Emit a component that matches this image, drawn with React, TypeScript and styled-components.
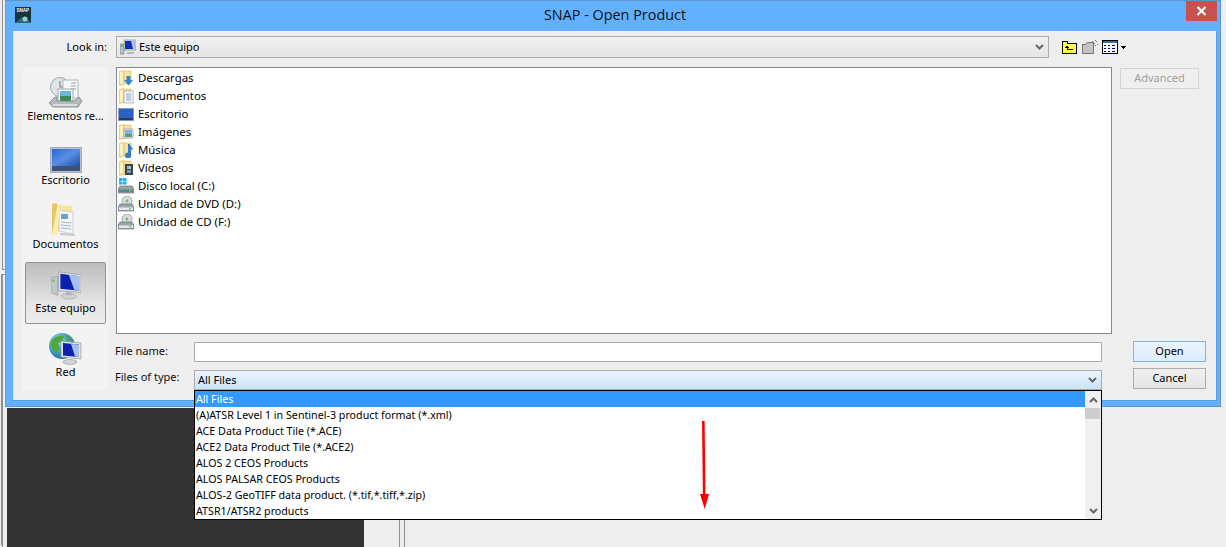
import React from "react";
import styled, {createGlobalStyle} from "styled-components";

const GlobalStyle = createGlobalStyle`
  html, body {
    margin: 0;
    padding: 0;
    background: #eeeeee;
  }
  body {
    font-family: "Noto Sans", "Liberation Sans", sans-serif;
    font-size: 11px;
    color: #000;
  }
`;

const places = ["Descargas", "Documentos", "Escritorio", "Imágenes", "Música", "Vídeos", "Disco local (C:)", "Unidad de DVD (D:)", "Unidad de CD (F:)"];

const fileTypes = [
    "All Files",
    "(A)ATSR Level 1 in Sentinel-3 product format (*.xml)",
    "ACE Data Product Tile (*.ACE)",
    "ACE2 Data Product Tile (*.ACE2)",
    "ALOS 2 CEOS Products",
    "ALOS PALSAR CEOS Products",
    "ALOS-2 GeoTIFF data product. (*.tif,*.tiff,*.zip)",
    "ATSR1/ATSR2 products",
];

const Chevron = ({up}: {up?: boolean}) => (
    <svg width="9" height="6" viewBox="0 0 9 6">
        <polyline points={up ? "1,5 4.5,1.5 8,5" : "1,1 4.5,4.5 8,1"} fill="none" stroke="#666" strokeWidth="2"/>
    </svg>
);

const SmallFolder = ({children}: {children?: React.ReactNode}) => (
    <svg width="16" height="16" viewBox="0 0 16 16">
        <path d="M6 1h7v13H6z" fill="#f6e29a" stroke="#d9bb68" strokeWidth="0.6"/>
        <path d="M1 1l5-1v15l-5 1z" fill="#f2cf70"/>
        <path d="M2 2l3-.6v12l-3 .6z" fill="#fdf0b8"/>
        {children}
    </svg>
);

const SmallDesktop = () => (
    <svg width="16" height="16" viewBox="0 0 16 16">
        <rect x="0" y="2" width="16" height="13" fill="#8b98ac"/>
        <rect x="1" y="3" width="14" height="9" fill="#2a62c8"/>
        <rect x="1" y="12" width="14" height="2" fill="#253a62"/>
    </svg>
);

const SmallDrive = ({disc}: {disc?: boolean}) => (
    <svg width="16" height="16" viewBox="0 0 16 16">
        {disc ? (
            <g>
                <circle cx="9" cy="5" r="5" fill="#d8dcdf" stroke="#8a9096" strokeWidth="0.7"/>
                <circle cx="9" cy="5" r="1.4" fill="#6fbf70"/>
            </g>
        ) : (
            <g fill="#19b4f0">
                <rect x="1" y="0" width="3.500" height="3"/>
                <rect x="5" y="0" width="3.500" height="3"/>
                <rect x="1" y="3.500" width="3.500" height="3"/>
                <rect x="5" y="3.500" width="3.500" height="3"/>
            </g>
        )}
        <path d="M2 8h12l2 3v4H0v-4z" fill="#9aa4a8" stroke="#5f686c" strokeWidth="0.6"/>
        <rect x="1" y="11.500" width="14" height="2.500" fill={disc ? "#e6e9ea" : "#4d8a8c"}/>
        <rect x="11" y="12" width="2" height="1.500" fill="#6cd06c"/>
    </svg>
);

const placeIcon = (name: string) => {
    switch (name) {
        case "Descargas":
            return <SmallFolder><path d="M8.500 6h4v4H15l-4.500 5.500L6 10h2.500z" fill="#2f86d6"/></SmallFolder>;
        case "Documentos":
            return <SmallFolder><rect x="6" y="3" width="9" height="12" fill="#f5f6f8" stroke="#9aa2aa" strokeWidth="0.7"/><path d="M8 6h5M8 8h5M8 10h5M8 12h5" stroke="#8ea4bc"/></SmallFolder>;
        case "Escritorio":
            return <SmallDesktop/>;
        case "Imágenes":
            return <SmallFolder><rect x="6" y="5" width="9" height="9" fill="#f2f4f6" stroke="#8c949c" strokeWidth="0.7"/><rect x="7" y="6" width="7" height="4" fill="#79b6d8"/><rect x="7" y="10" width="7" height="3" fill="#5a9a78"/></SmallFolder>;
        case "Música":
            return <SmallFolder><path d="M10 2h2c0 3 3 3 3 6l-2-1v6a3 3 0 1 1-3-2.500z" fill="#2f7fc8"/></SmallFolder>;
        case "Vídeos":
            return <SmallFolder><rect x="7" y="4" width="8" height="11" fill="#39414a"/><rect x="9" y="6" width="4" height="3" fill="#9cc0d0"/><rect x="9" y="10" width="4" height="3" fill="#7fa0a8"/></SmallFolder>;
        case "Disco local (C:)":
            return <SmallDrive/>;
        default:
            return <SmallDrive disc/>;
    }
};

const ComputerSmall = () => (
    <svg width="16" height="16" viewBox="0 0 16 16">
        <rect x="0" y="5" width="4" height="10" fill="#b9c0c4" stroke="#6e767a" strokeWidth="0.6"/>
        <rect x="1" y="6" width="2" height="2" fill="#57c457"/>
        <rect x="4" y="1" width="12" height="10" fill="#d3d8dc" stroke="#7b8388" strokeWidth="0.6"/>
        <path d="M5 2h10v8H5z" fill="#0a2fb8"/>
        <path d="M11 2h4v8h-2z" fill="#a9c0ee"/>
        <path d="M7 13h7v2H7z" fill="#b0b6ba"/>
    </svg>
);

const RecentIcon = () => (
    <svg width="34" height="32" viewBox="0 0 34 32">
        <circle cx="11" cy="10" r="9.500" fill="#dfe5e8" stroke="#9aa5aa"/>
        <path d="M11 4v6h5" fill="none" stroke="#7d888e" strokeWidth="1.200"/>
        <rect x="14" y="3" width="15" height="18" fill="#f6f7f8" stroke="#b2b8bc"/>
        <path d="M22 6h5M22 9h5M22 12h5" stroke="#7fa8c8"/>
        <rect x="9" y="12" width="15" height="14" fill="#f8f9fa" stroke="#a2a9ad"/>
        <rect x="11" y="14" width="11" height="5" fill="#6fb4dc"/>
        <rect x="11" y="19" width="11" height="5" fill="#3c8a58"/>
        <path d="M0 26l6-6h2v4h17l5-4 3 4-4 6H4z" fill="#b4babd" stroke="#70777b" strokeWidth="0.7"/>
        <path d="M4 28h24" stroke="#e6e9ea" strokeWidth="1.500"/>
    </svg>
);

const DesktopIcon = () => (
    <svg width="32" height="26" viewBox="0 0 32 26">
        <defs>
            <linearGradient id="deskScreen" x1="0" y1="0" x2="1" y2="1">
                <stop offset="0" stopColor="#2868d0"/>
                <stop offset="0.5" stopColor="#5a8ee4"/>
                <stop offset="1" stopColor="#1c4fa8"/>
            </linearGradient>
        </defs>
        <rect x="0.500" y="0.500" width="31" height="25" fill="#b8c0cc" stroke="#a0abbb"/>
        <rect x="2" y="2" width="28" height="17" fill="url(#deskScreen)"/>
        <rect x="2" y="19" width="28" height="5" fill="#3e5272"/>
    </svg>
);

const DocumentsIcon = () => (
    <svg width="30" height="34" viewBox="0 0 30 34">
        <path d="M1 1l5-1v30l-5 2z" fill="#e9c664"/>
        <path d="M6 2l15 1v25H6z" fill="#f7e49a"/>
        <path d="M8 7l14 2v22L8 28z" fill="#f3f5f7" stroke="#b2b8bc" strokeWidth="0.6"/>
        <rect x="10" y="11" width="7" height="5" fill="#6aa6cc"/>
        <path d="M10 19l10 1M10 22l10 1M10 25l10 1" stroke="#a8b4c0"/>
        <path d="M1 32L6 4l3 2-3 26z" fill="#fbeeb4"/>
        <path d="M9 31l15 1" stroke="#c8c8c8" strokeWidth="2"/>
    </svg>
);

const ComputerIcon = () => (
    <svg width="30" height="30" viewBox="0 0 32 32">
        <path d="M0 7l7-1v20l-7-3z" fill="#c4c8cb" stroke="#8b9195" strokeWidth="0.6"/>
        <rect x="1.500" y="9" width="2.500" height="2.500" fill="#6ac46a"/>
        <path d="M8 1l24 3v19l-24-2z" fill="#dde0e3" stroke="#8b9195" strokeWidth="0.6"/>
        <path d="M10 3l20 2.500V21L10 19z" fill="#0b22b0"/>
        <path d="M19 4l11 1.500V21l-5-.5z" fill="#a8c0ec"/>
        <ellipse cx="19" cy="27" rx="8" ry="3" fill="#cfd3d6" stroke="#969b9e" strokeWidth="0.6"/>
        <rect x="16" y="22" width="6" height="4" fill="#b2b7ba"/>
    </svg>
);

const NetworkIcon = () => (
    <svg width="33" height="32" viewBox="0 0 33 32">
        <defs>
            <radialGradient id="netGlobe" cx="0.35" cy="0.3" r="0.8">
                <stop offset="0" stopColor="#7fd4ea"/>
                <stop offset="1" stopColor="#146aa0"/>
            </radialGradient>
        </defs>
        <circle cx="13" cy="13" r="13" fill="url(#netGlobe)"/>
        <path d="M4 6c4-3 7-4 11-3l-2 5-4 2 2 5-3 5-5-4-2-5z" fill="#4fa83a"/>
        <path d="M17 2l6 4-5 3z" fill="#4fa83a"/>
        <path d="M12 8l20 2v16l-20-2z" fill="#dfe2e5" stroke="#8a9094" strokeWidth="0.6"/>
        <path d="M14 10l16 1.500V24l-16-1.500z" fill="#0b22b0"/>
        <path d="M22 11l8 .5V24l-4-.5z" fill="#a8c0ec"/>
        <ellipse cx="21" cy="29" rx="7" ry="2.500" fill="#cfd3d6" stroke="#969b9e" strokeWidth="0.6"/>
    </svg>
);

const SnapLogo = () => (
    <svg width="16" height="16" viewBox="0 0 16 16">
        <rect width="16" height="16" fill="#17353f"/>
        <path d="M0 16l7-6 5 1 4 5z" fill="#2d6a72"/>
        <circle cx="10" cy="12" r="2.500" fill="#9dc8d8"/>
        <text x="1.500" y="5" fontSize="4.500" fontWeight="700" fill="#fff" fontFamily="Liberation Sans, sans-serif">SNAP</text>
    </svg>
);

const UpFolderIcon = () => (
    <svg width="16" height="14" viewBox="0 0 16 14" shapeRendering="crispEdges">
        <path d="M1 1h5v2h9v10H1z" fill="#ffff4d" stroke="#000"/>
        <path d="M6 5l-2 2.500h1.500V10H12V9H7V7.500h1z" fill="#000"/>
    </svg>
);

const NewFolderIcon = () => (
    <svg width="17" height="14" viewBox="0 0 17 14" shapeRendering="crispEdges">
        <path d="M1 4h4l2-2h5v11H1z" fill="#c4c4c4" stroke="#777"/>
        <path d="M13 3h1M15 1h1M11 1h1M14 0v1M16 4h1M14 5h1" stroke="#777"/>
    </svg>
);

const DetailsIcon = () => (
    <svg width="24" height="14" viewBox="0 0 24 14" shapeRendering="crispEdges">
        <rect x="0.500" y="0.500" width="15" height="13" fill="#fff" stroke="#000"/>
        <rect x="1" y="1" width="14" height="2" fill="#3a6ea5"/>
        <path d="M2 5h2M6 5h2M10 5h3M2 8h2M6 8h2M10 8h3M2 11h2M6 11h2M10 11h3" stroke="#00007f"/>
        <path d="M18 6h6l-3 3z" fill="#000"/>
    </svg>
);

const App = () => {
    return (
        <>
            <GlobalStyle/>
            <Desktop>
                <Backdrop>
                    <LeftRail>
                        <RailTop/>
                        <RailBottom/>
                    </LeftRail>
                    <DarkPanel/>
                    <Sash/>
                </Backdrop>

                <DialogWindow>
                    <TitleBar>
                        <SnapLogo/>
                        <Title>SNAP - Open Product</Title>
                        <CloseButton aria-label="Close">
                            <svg width="11" height="10" viewBox="0 0 11 10">
                                <path d="M1.500 1l8 8M9.500 1l-8 8" stroke="#fff" strokeWidth="2.200"/>
                            </svg>
                        </CloseButton>
                    </TitleBar>

                    <Client>
                        <LookInLabel>Look in:</LookInLabel>
                        <LookInRow>
                            <Combo>
                                <ComputerSmall/>
                                <ComboText>Este equipo</ComboText>
                                <Chevron/>
                            </Combo>
                            <Toolbar>
                                <UpFolderIcon/>
                                <NewFolderIcon/>
                                <DetailsIcon/>
                            </Toolbar>
                        </LookInRow>

                        <Sidebar>
                            <ShortcutItem><RecentIcon/><ShortcutLabel>Elementos re...</ShortcutLabel></ShortcutItem>
                            <ShortcutItem><DesktopIcon/><ShortcutLabel>Escritorio</ShortcutLabel></ShortcutItem>
                            <ShortcutItem><DocumentsIcon/><ShortcutLabel>Documentos</ShortcutLabel></ShortcutItem>
                            <ShortcutItem $selected><ComputerIcon/><ShortcutLabel>Este equipo</ShortcutLabel></ShortcutItem>
                            <ShortcutItem><NetworkIcon/><ShortcutLabel>Red</ShortcutLabel></ShortcutItem>
                        </Sidebar>

                        <Main>
                            <ListRow>
                                <FileList>
                                    {places.map((name) => (
                                        <FileRow key={name}>
                                            {placeIcon(name)}
                                            <span>{name}</span>
                                        </FileRow>
                                    ))}
                                </FileList>
                                <AccessoryButton disabled>Advanced</AccessoryButton>
                            </ListRow>

                            <FormRow>
                                <Fields>
                                    <FieldLabel $inset={2}>File name:</FieldLabel>
                                    <NameInput/>
                                    <FieldLabel $inset={0}>Files of type:</FieldLabel>
                                    <TypeField>
                                        <Combo $active>
                                            <ComboText>All Files</ComboText>
                                            <Chevron/>
                                        </Combo>
                                        <TypePopup>
                                            <TypeList>
                                                {fileTypes.map((type, i) => (
                                                    <TypeRow key={type} $selected={i === 0}>{type}</TypeRow>
                                                ))}
                                            </TypeList>
                                            <ScrollTrack>
                                                <ScrollEnd><Chevron up/></ScrollEnd>
                                                <ScrollThumb/>
                                                <ScrollEnd><Chevron/></ScrollEnd>
                                            </ScrollTrack>
                                            <RedArrow width="11" height="90" viewBox="0 0 11 90">
                                                <path d="M4.300 1L5.200 76" stroke="#f00" strokeWidth="2.600" fill="none"/>
                                                <path d="M1 74h9l-4.300 15z" fill="#f00"/>
                                            </RedArrow>
                                        </TypePopup>
                                    </TypeField>
                                </Fields>
                                <Actions>
                                    <ActionButton $primary>Open</ActionButton>
                                    <ActionButton>Cancel</ActionButton>
                                </Actions>
                            </FormRow>
                        </Main>
                    </Client>
                </DialogWindow>
            </Desktop>
        </>
    );
};

const Desktop = styled.div`
  position: relative;
  width: 1226px;
  height: 547px;
  overflow: hidden;
  background: #eeeeee;
`;

const Backdrop = styled.div`
  display: flex;
  height: 100%;
`;

const LeftRail = styled.div`
  width: 7px;
  flex: none;
`;

const RailTop = styled.div`
  height: 269px;
  width: 3px;
  margin-left: 2px;
  border-left: 1px solid #8f8f8f;
  border-bottom: 1px solid #8f8f8f;
`;

const RailBottom = styled.div`
  height: 272px;
  width: 3px;
  margin: 4px 0 0 2px;
  border-left: 1px solid #8f8f8f;
  border-top: 1px solid #8f8f8f;
  box-shadow: -2px -1px 0 -1px #8f8f8f;
`;

const DarkPanel = styled.div`
  width: 357px;
  flex: none;
  margin-top: 408px;
  background: #333333;
`;

const Sash = styled.div`
  width: 4px;
  flex: none;
  margin-left: 35px;
  border-left: 1px solid #8f8f8f;
  border-right: 1px solid #8f8f8f;
`;

const DialogWindow = styled.div`
  position: absolute;
  left: 5px;
  top: 0;
  width: 1216px;
  height: 407px;
  box-sizing: border-box;
  display: flex;
  flex-direction: column;
  background: #62b0fe;
  border: 1px solid #5c94cc;
  border-left-color: #7d9ab8;
  padding: 0 3px 5px 7px;
`;

const TitleBar = styled.div`
  position: relative;
  height: 30px;
  flex: none;
  display: flex;
  align-items: center;
  padding: 0 0 0 2px;
  & > svg {
    margin-top: -2px;
  }
`;

const Title = styled.div`
  position: absolute;
  left: 0;
  right: 0;
  top: 4px;
  text-align: center;
  font-family: "Open Sans", sans-serif;
  font-size: 14.4px;
  line-height: 19px;
  color: #111;
`;

const CloseButton = styled.div`
  position: absolute;
  right: 0;
  top: 0;
  width: 31px;
  height: 20px;
  display: flex;
  align-items: center;
  justify-content: center;
  background: #c75050;
`;

const Client = styled.div`
  flex: 1;
  display: grid;
  grid-template-columns: 85px 1fr;
  grid-template-rows: 22px 323px;
  column-gap: 8px;
  row-gap: 9px;
  padding: 5px 12px 0 10px;
  background: #eeeeee;
  border: 1px solid #5a9ade;
  border-width: 0 1px 1px 0;
`;

const LookInLabel = styled.div`
  align-self: center;
  text-align: right;
  padding-right: 1px;
  line-height: 14px;
`;

const LookInRow = styled.div`
  display: flex;
  align-items: center;
  gap: 12px;
`;

const Combo = styled.div<{$active?: boolean}>`
  display: flex;
  align-items: center;
  gap: 3px;
  box-sizing: border-box;
  height: ${(p) => (p.$active ? "20px" : "22px")};
  width: ${(p) => (p.$active ? "100%" : "933px")};
  padding: 0 4px 0 3px;
  border: 1px solid #acacac;
  background: ${(p) => (p.$active ? "linear-gradient(#ecf4fc, #c9e3fb)" : "linear-gradient(#f0f0f0, #e5e5e5)")};
`;

const ComboText = styled.span`
  flex: 1;
  line-height: 14px;
`;

const Toolbar = styled.div`
  display: flex;
  align-items: center;
  gap: 4px;
`;

const Sidebar = styled.div`
  display: flex;
  flex-direction: column;
  gap: 2px;
  padding: 3px 2px 0;
  background: #f3f3f3;
`;

const ShortcutItem = styled.div<{$selected?: boolean}>`
  box-sizing: border-box;
  height: 62px;
  display: flex;
  flex-direction: column;
  align-items: center;
  justify-content: flex-end;
  padding-bottom: 8px;
  border: 1px solid ${(p) => (p.$selected ? "#949494" : "transparent")};
  border-radius: 2px;
  background: ${(p) => (p.$selected ? "linear-gradient(#bdbdbd, #e6e6e6 70%, #ececec)" : "none")};
`;

const ShortcutLabel = styled.div`
  line-height: 14px;
  white-space: nowrap;
`;

const Main = styled.div`
  display: flex;
  flex-direction: column;
  gap: 8px;
`;

const ListRow = styled.div`
  display: flex;
  align-items: flex-start;
  gap: 8px;
`;

const FileList = styled.div`
  box-sizing: border-box;
  width: 996px;
  height: 267px;
  padding: 1px;
  background: #fff;
  border: 1px solid #828790;
`;

const FileRow = styled.div`
  display: flex;
  align-items: center;
  gap: 4px;
  height: 18px;
  line-height: 14px;
  font-size: 11.4px;
`;

const AccessoryButton = styled.button`
  box-sizing: border-box;
  width: 79px;
  height: 21px;
  margin-top: 1px;
  padding: 0 0 2px;
  font: inherit;
  color: #a0a0a0;
  background: #efefef;
  border: 1px solid #d4d4d4;
`;

const FormRow = styled.div`
  display: flex;
  align-items: flex-start;
  gap: 31px;
`;

const Fields = styled.div`
  display: grid;
  grid-template-columns: 78px 908px;
  grid-template-rows: 20px 20px;
  row-gap: 8px;
  width: 986px;
  flex: none;
`;

const FieldLabel = styled.div<{$inset: number}>`
  margin-left: -1px;
  line-height: 14px;
  padding-top: ${(p) => p.$inset}px;
  color: #111;
`;

const NameInput = styled.div`
  box-sizing: border-box;
  background: #fff;
  border: 1px solid #acacac;
`;

const TypeField = styled.div`
  position: relative;
`;

const TypePopup = styled.div`
  position: absolute;
  left: 0;
  top: 100%;
  z-index: 2;
  box-sizing: border-box;
  width: 908px;
  height: 130px;
  display: flex;
  background: #fff;
  border: 1px solid #000;
`;

const TypeList = styled.div`
  flex: 1;
  font-size: 10.7px;
`;

const TypeRow = styled.div<{$selected?: boolean}>`
  height: 16px;
  line-height: 16px;
  padding-left: 1px;
  color: ${(p) => (p.$selected ? "#fff" : "#000")};
  background: ${(p) => (p.$selected ? "#3399ff" : "transparent")};
`;

const ScrollTrack = styled.div`
  width: 16px;
  flex: none;
  display: flex;
  flex-direction: column;
  background: #f0f0f0;
`;

const ScrollEnd = styled.div`
  height: 17px;
  flex: none;
  display: flex;
  align-items: center;
  justify-content: center;
  &:last-child {
    margin-top: auto;
  }
`;

const ScrollThumb = styled.div`
  height: 11px;
  margin-right: 1px;
  background: #cdcdcd;
`;

const RedArrow = styled.svg`
  position: absolute;
  left: 504px;
  top: 29px;
`;

const Actions = styled.div`
  display: flex;
  flex-direction: column;
  gap: 6px;
  margin-top: -1px;
`;

const ActionButton = styled.button<{$primary?: boolean}>`
  box-sizing: border-box;
  width: 73px;
  height: 21px;
  padding: 0 0 2px;
  font: inherit;
  color: #000;
  border: 1px solid ${(p) => (p.$primary ? "#7eb4ea" : "#acacac")};
  background: ${(p) => (p.$primary ? "linear-gradient(#ecf4fc, #dcecfc)" : "linear-gradient(#f0f0f0, #e5e5e5)")};
`;

export default App;
